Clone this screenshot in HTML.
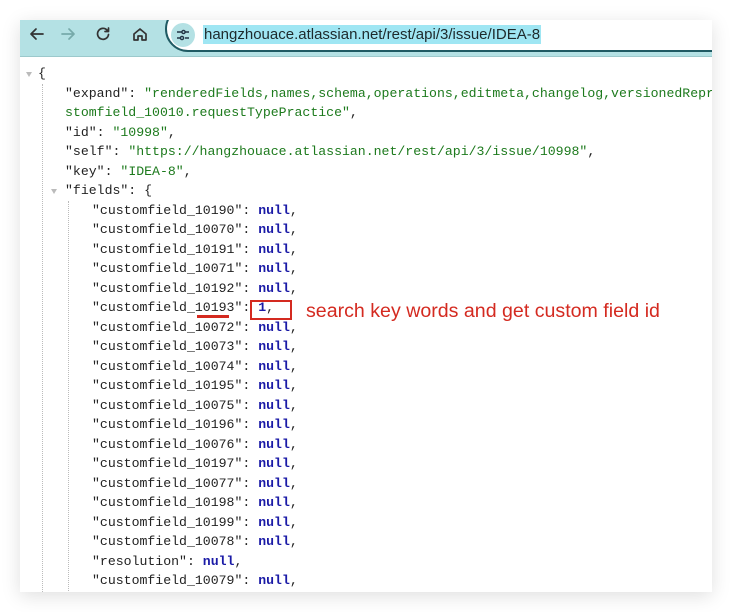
<!DOCTYPE html>
<html><head><meta charset="utf-8"><style>
*{margin:0;padding:0;box-sizing:border-box}
body{width:732px;height:612px;background:#fff;position:relative;overflow:hidden;font-family:"Liberation Sans",sans-serif}
#win{position:absolute;left:20px;top:20px;width:692px;height:572px;background:#fff;box-shadow:0 4px 18px rgba(0,0,0,0.13);overflow:hidden}
#bar{position:absolute;left:0;top:0;width:692px;height:37px;background:#b4e1e4;border-bottom:1px solid #9cc9cc}
#pill{position:absolute;left:145px;top:-14px;width:600px;height:46px;background:#fff;border:2.5px solid #1f5a63;border-radius:23px}
#ic{position:absolute;left:151px;top:3px;width:24px;height:24px;border-radius:12px;background:#b4e1e4}
#url{position:absolute;left:183px;top:5px;font-size:15px;color:#1e2a2c;background:#9fe6f3;line-height:19px;padding:0 1px}
.code{position:absolute;left:-20px;top:-20px;width:732px;height:612px;font-family:"Liberation Mono",monospace;font-size:13.2px;color:#222;white-space:pre}
.l{position:absolute;height:19.5px;line-height:19.5px}
.s{color:#1d7a1d}.n{color:#1a1aa6;font-weight:bold}
.g{position:absolute;border-left:1px dotted #bbb}
.tri{position:absolute;width:0;height:0;border-left:3.5px solid transparent;border-right:3.5px solid transparent;border-top:5px solid #bbb}
</style></head><body>
<div id="win">
<div class="code">
<div class="tri" style="left:26px;top:72px"></div>
<div class="tri" style="left:51px;top:189px"></div>
<div class="g" style="left:42px;top:84px;height:530px"></div>
<div class="g" style="left:68px;top:201px;height:410px"></div>
<div class="l" style="left:38px;top:64px">{</div>
<div class="l" style="left:65px;top:84px">"expand": <span class="s">"renderedFields,names,schema,operations,editmeta,changelog,versionedRepre</span></div>
<div class="l" style="left:65px;top:103px"><span class="s">stomfield_10010.requestTypePractice"</span>,</div>
<div class="l" style="left:65px;top:123px">"id": <span class="s">"10998"</span>,</div>
<div class="l" style="left:65px;top:142px">"self": <span class="s">"https://hangzhouace.atlassian.net/rest/api/3/issue/10998"</span>,</div>
<div class="l" style="left:65px;top:162px">"key": <span class="s">"IDEA-8"</span>,</div>
<div class="l" style="left:65px;top:181px">"fields": {</div>
<div class="l" style="left:92px;top:201px">"customfield_10190": <span class="n">null</span>,</div>
<div class="l" style="left:92px;top:220px">"customfield_10070": <span class="n">null</span>,</div>
<div class="l" style="left:92px;top:240px">"customfield_10191": <span class="n">null</span>,</div>
<div class="l" style="left:92px;top:259px">"customfield_10071": <span class="n">null</span>,</div>
<div class="l" style="left:92px;top:279px">"customfield_10192": <span class="n">null</span>,</div>
<div class="l" style="left:92px;top:298px">"customfield_10193": <span class="n">1</span>,</div>
<div class="l" style="left:92px;top:318px">"customfield_10072": <span class="n">null</span>,</div>
<div class="l" style="left:92px;top:337px">"customfield_10073": <span class="n">null</span>,</div>
<div class="l" style="left:92px;top:357px">"customfield_10074": <span class="n">null</span>,</div>
<div class="l" style="left:92px;top:376px">"customfield_10195": <span class="n">null</span>,</div>
<div class="l" style="left:92px;top:396px">"customfield_10075": <span class="n">null</span>,</div>
<div class="l" style="left:92px;top:415px">"customfield_10196": <span class="n">null</span>,</div>
<div class="l" style="left:92px;top:435px">"customfield_10076": <span class="n">null</span>,</div>
<div class="l" style="left:92px;top:454px">"customfield_10197": <span class="n">null</span>,</div>
<div class="l" style="left:92px;top:474px">"customfield_10077": <span class="n">null</span>,</div>
<div class="l" style="left:92px;top:493px">"customfield_10198": <span class="n">null</span>,</div>
<div class="l" style="left:92px;top:513px">"customfield_10199": <span class="n">null</span>,</div>
<div class="l" style="left:92px;top:532px">"customfield_10078": <span class="n">null</span>,</div>
<div class="l" style="left:92px;top:552px">"resolution": <span class="n">null</span>,</div>
<div class="l" style="left:92px;top:571px">"customfield_10079": <span class="n">null</span>,</div>
</div>
<div id="bar">
<svg style="position:absolute;left:0;top:0" width="145" height="37" fill="none" stroke="#333" stroke-width="1.7" stroke-linecap="round" stroke-linejoin="round">
<path d="M11 14h12M11 14l5-5M11 14l5 5"/>
<path d="M42 14h12M54 14l-5-5M54 14l-5 5" stroke="#7aa"/>
<path d="M87 10a5.5 5.5 0 1 0 1.5 4.5M88.5 8v3.5h-3.5"/>
<path d="M114 20v-6l6-5 6 5v6h-4v-4h-4v4z"/>
</svg>
<div id="pill"></div>
<div id="ic"><svg width="24" height="24" stroke="#234" stroke-width="1.4" fill="none"><path d="M6 9h5M14 9h4M6 15h3M14 15h4"/><circle cx="12.5" cy="9" r="1.6"/><circle cx="11" cy="15" r="1.6"/></svg></div>
<div id="url">hangzhouace.atlassian.net/rest/api/3/issue/IDEA-8</div>
</div>
</div>
<div style="position:absolute;left:197px;top:315px;width:32px;height:2.5px;background:#d42a20"></div>
<div style="position:absolute;left:250px;top:300px;width:42px;height:20px;border:2.5px solid #d42a20"></div>
<div style="position:absolute;left:306px;top:300px;font-size:19.6px;color:#d42a20;line-height:23px;white-space:nowrap">search key words and get custom field id</div>
</body></html>
